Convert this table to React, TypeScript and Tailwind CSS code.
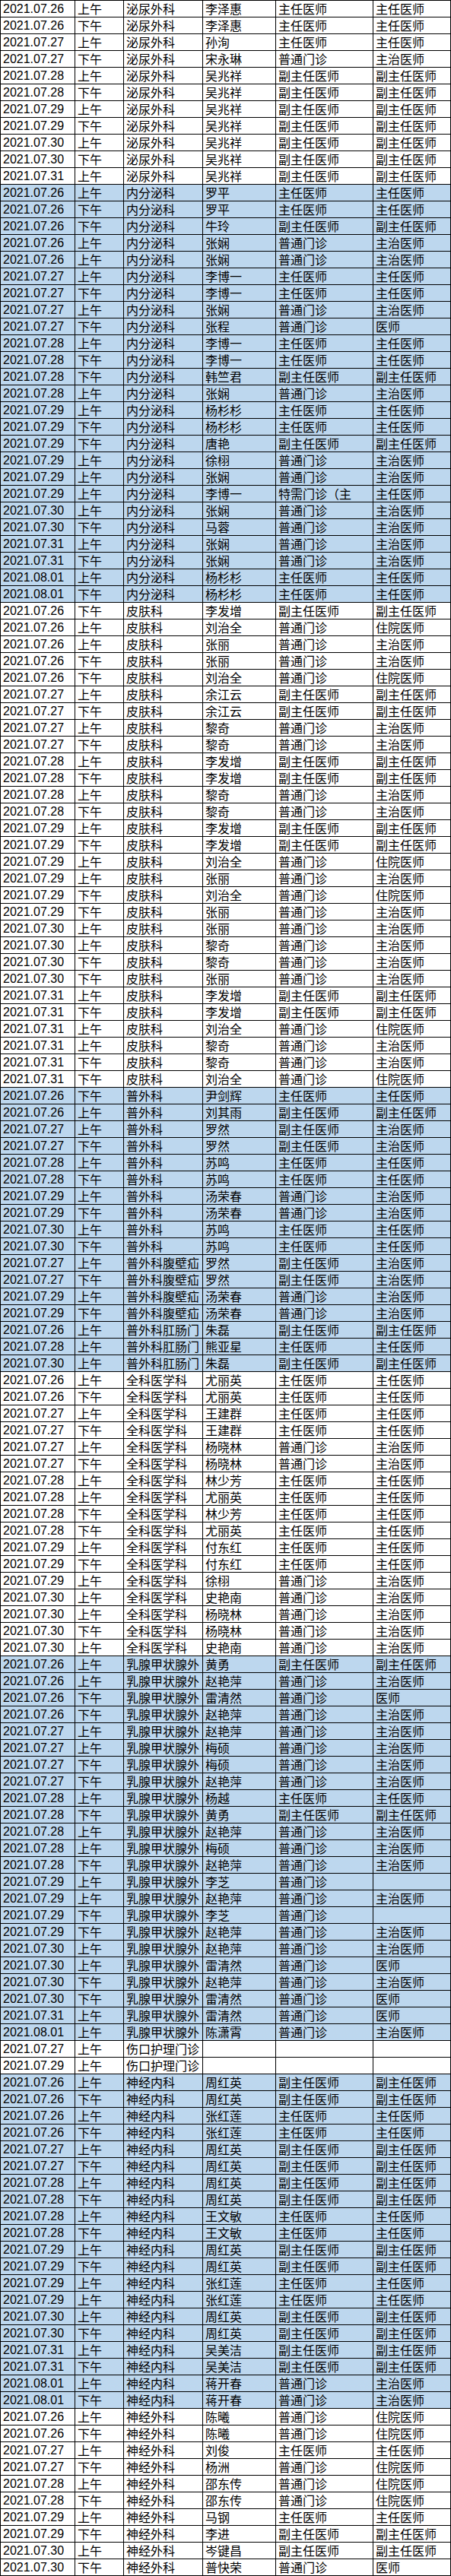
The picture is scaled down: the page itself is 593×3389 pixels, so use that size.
const Z = "主任医师";
const F = "副主任医师";
const P = "普通门诊";
const ZZ = "主治医师";
const ZY = "住院医师";
const Y = "医师";

type Row = [string, string, string, string, string];
type Section = { dept: string; blue: boolean; rows: Row[]; subs?: { dept: string; rows: Row[] }[] };

const sections: Section[] = [
  {
    dept: "泌尿外科",
    blue: false,
    rows: [
      ["07.26", "上午", "李泽惠", Z, Z],
      ["07.26", "下午", "李泽惠", Z, Z],
      ["07.27", "上午", "孙洵", Z, Z],
      ["07.27", "下午", "宋永琳", P, ZZ],
      ["07.28", "上午", "吴兆祥", F, F],
      ["07.28", "下午", "吴兆祥", F, F],
      ["07.29", "上午", "吴兆祥", F, F],
      ["07.29", "下午", "吴兆祥", F, F],
      ["07.30", "上午", "吴兆祥", F, F],
      ["07.30", "下午", "吴兆祥", F, F],
      ["07.31", "上午", "吴兆祥", F, F],
    ],
  },
  {
    dept: "内分泌科",
    blue: true,
    rows: [
      ["07.26", "上午", "罗平", Z, Z],
      ["07.26", "下午", "罗平", Z, Z],
      ["07.26", "下午", "牛玲", F, F],
      ["07.26", "上午", "张娴", P, ZZ],
      ["07.26", "上午", "张娴", P, ZZ],
      ["07.27", "上午", "李博一", Z, Z],
      ["07.27", "下午", "李博一", Z, Z],
      ["07.27", "上午", "张娴", P, ZZ],
      ["07.27", "下午", "张程", P, Y],
      ["07.28", "上午", "李博一", Z, Z],
      ["07.28", "下午", "李博一", Z, Z],
      ["07.28", "下午", "韩竺君", F, F],
      ["07.28", "上午", "张娴", P, ZZ],
      ["07.29", "上午", "杨杉杉", Z, Z],
      ["07.29", "下午", "杨杉杉", Z, Z],
      ["07.29", "下午", "唐艳", F, F],
      ["07.29", "上午", "徐栩", P, ZZ],
      ["07.29", "上午", "张娴", P, ZZ],
      ["07.29", "上午", "李博一", "特需门诊（主", Z],
      ["07.30", "上午", "张娴", P, ZZ],
      ["07.30", "下午", "马蓉", P, ZZ],
      ["07.31", "上午", "张娴", P, ZZ],
      ["07.31", "下午", "张娴", P, ZZ],
      ["08.01", "上午", "杨杉杉", Z, Z],
      ["08.01", "下午", "杨杉杉", Z, Z],
    ],
  },
  {
    dept: "皮肤科",
    blue: false,
    rows: [
      ["07.26", "下午", "李发增", F, F],
      ["07.26", "上午", "刘治全", P, ZY],
      ["07.26", "上午", "张丽", P, ZZ],
      ["07.26", "下午", "张丽", P, ZZ],
      ["07.26", "下午", "刘治全", P, ZY],
      ["07.27", "上午", "余江云", F, F],
      ["07.27", "下午", "余江云", F, F],
      ["07.27", "上午", "黎奇", P, ZZ],
      ["07.27", "下午", "黎奇", P, ZZ],
      ["07.28", "上午", "李发增", F, F],
      ["07.28", "下午", "李发增", F, F],
      ["07.28", "上午", "黎奇", P, ZZ],
      ["07.28", "下午", "黎奇", P, ZZ],
      ["07.29", "上午", "李发增", F, F],
      ["07.29", "下午", "李发增", F, F],
      ["07.29", "上午", "刘治全", P, ZY],
      ["07.29", "上午", "张丽", P, ZZ],
      ["07.29", "下午", "刘治全", P, ZY],
      ["07.29", "下午", "张丽", P, ZZ],
      ["07.30", "上午", "张丽", P, ZZ],
      ["07.30", "上午", "黎奇", P, ZZ],
      ["07.30", "下午", "黎奇", P, ZZ],
      ["07.30", "下午", "张丽", P, ZZ],
      ["07.31", "上午", "李发增", F, F],
      ["07.31", "下午", "李发增", F, F],
      ["07.31", "上午", "刘治全", P, ZY],
      ["07.31", "上午", "黎奇", P, ZZ],
      ["07.31", "下午", "黎奇", P, ZZ],
      ["07.31", "下午", "刘治全", P, ZY],
    ],
  },
  {
    dept: "普外科",
    blue: true,
    rows: [
      ["07.26", "下午", "尹剑辉", Z, Z],
      ["07.26", "上午", "刘其雨", F, F],
      ["07.27", "上午", "罗然", F, ZZ],
      ["07.27", "下午", "罗然", F, ZZ],
      ["07.28", "上午", "苏鸣", Z, Z],
      ["07.28", "下午", "苏鸣", Z, Z],
      ["07.29", "上午", "汤荣春", P, ZZ],
      ["07.29", "下午", "汤荣春", P, ZZ],
      ["07.30", "上午", "苏鸣", Z, Z],
      ["07.30", "下午", "苏鸣", Z, Z],
    ],
    subs: [
      {
        dept: "普外科腹壁疝",
        rows: [
          ["07.27", "上午", "罗然", F, ZZ],
          ["07.27", "下午", "罗然", F, ZZ],
          ["07.29", "上午", "汤荣春", P, ZZ],
          ["07.29", "下午", "汤荣春", P, ZZ],
        ],
      },
      {
        dept: "普外科肛肠门",
        rows: [
          ["07.26", "上午", "朱磊", F, F],
          ["07.28", "上午", "熊亚星", Z, Z],
          ["07.30", "上午", "朱磊", F, F],
        ],
      },
    ],
  },
  {
    dept: "全科医学科",
    blue: false,
    rows: [
      ["07.26", "上午", "尤丽英", Z, Z],
      ["07.26", "下午", "尤丽英", Z, Z],
      ["07.27", "上午", "王建群", Z, Z],
      ["07.27", "下午", "王建群", Z, Z],
      ["07.27", "上午", "杨晓林", P, ZZ],
      ["07.27", "下午", "杨晓林", P, ZZ],
      ["07.28", "上午", "林少芳", Z, Z],
      ["07.28", "上午", "尤丽英", Z, Z],
      ["07.28", "下午", "林少芳", Z, Z],
      ["07.28", "下午", "尤丽英", Z, Z],
      ["07.29", "上午", "付东红", Z, Z],
      ["07.29", "下午", "付东红", Z, Z],
      ["07.29", "上午", "徐栩", P, ZZ],
      ["07.30", "上午", "史艳南", P, ZZ],
      ["07.30", "上午", "杨晓林", P, ZZ],
      ["07.30", "下午", "杨晓林", P, ZZ],
      ["07.30", "上午", "史艳南", P, ZZ],
    ],
  },
  {
    dept: "乳腺甲状腺外",
    blue: true,
    rows: [
      ["07.26", "上午", "黄勇", F, F],
      ["07.26", "上午", "赵艳萍", P, ZZ],
      ["07.26", "下午", "雷清然", P, Y],
      ["07.26", "下午", "赵艳萍", P, ZZ],
      ["07.27", "上午", "赵艳萍", P, ZZ],
      ["07.27", "上午", "梅硕", P, ZZ],
      ["07.27", "下午", "梅硕", P, ZZ],
      ["07.27", "下午", "赵艳萍", P, ZZ],
      ["07.28", "上午", "杨越", Z, Z],
      ["07.28", "下午", "黄勇", F, F],
      ["07.28", "上午", "赵艳萍", P, ZZ],
      ["07.28", "上午", "梅硕", P, ZZ],
      ["07.28", "下午", "赵艳萍", P, ZZ],
      ["07.29", "上午", "李芝", P, ""],
      ["07.29", "上午", "赵艳萍", P, ZZ],
      ["07.29", "下午", "李芝", P, ""],
      ["07.29", "下午", "赵艳萍", P, ZZ],
      ["07.30", "上午", "赵艳萍", P, ZZ],
      ["07.30", "上午", "雷清然", P, Y],
      ["07.30", "下午", "赵艳萍", P, ZZ],
      ["07.30", "下午", "雷清然", P, Y],
      ["07.31", "上午", "雷清然", P, Y],
      ["08.01", "上午", "陈潇霄", P, ZZ],
    ],
  },
  {
    dept: "伤口护理门诊",
    blue: false,
    rows: [
      ["07.27", "上午", "", "", ""],
      ["07.29", "上午", "", "", ""],
    ],
  },
  {
    dept: "神经内科",
    blue: true,
    rows: [
      ["07.26", "上午", "周红英", F, F],
      ["07.26", "下午", "周红英", F, F],
      ["07.26", "上午", "张红莲", Z, Z],
      ["07.26", "下午", "张红莲", Z, Z],
      ["07.27", "上午", "周红英", F, F],
      ["07.27", "下午", "周红英", F, F],
      ["07.28", "上午", "周红英", F, F],
      ["07.28", "下午", "周红英", F, F],
      ["07.28", "上午", "王文敏", Z, Z],
      ["07.28", "下午", "王文敏", Z, Z],
      ["07.29", "上午", "周红英", F, F],
      ["07.29", "下午", "周红英", F, F],
      ["07.29", "上午", "张红莲", Z, Z],
      ["07.29", "上午", "张红莲", Z, Z],
      ["07.30", "上午", "周红英", F, F],
      ["07.30", "下午", "周红英", F, F],
      ["07.31", "上午", "吴美洁", F, F],
      ["07.31", "下午", "吴美洁", F, F],
      ["08.01", "上午", "蒋开春", P, ZZ],
      ["08.01", "下午", "蒋开春", P, ZZ],
    ],
  },
  {
    dept: "神经外科",
    blue: false,
    rows: [
      ["07.26", "上午", "陈曦", P, ZY],
      ["07.26", "下午", "陈曦", P, ZY],
      ["07.27", "上午", "刘俊", Z, Z],
      ["07.27", "下午", "杨洲", P, ZY],
      ["07.28", "上午", "邵东传", P, ZY],
      ["07.28", "下午", "邵东传", P, ZY],
      ["07.29", "上午", "马钢", Z, Z],
      ["07.29", "下午", "李进", F, F],
      ["07.30", "上午", "岑键昌", F, F],
      ["07.30", "下午", "普快荣", P, Y],
    ],
  },
];

const cjk = "font-['Noto_Sans_CJK_SC',sans-serif]";
const cell = "h-full whitespace-nowrap border-r border-black pl-[3px] text-[16px] leading-[21px]";

function ScheduleRow({ dept, blue, row }: { dept: string; blue: boolean; row: Row }) {
  const [date, half, name, kind, title] = row;
  return (
    <div className={`flex h-[22px] border-b border-black text-black ${blue ? "bg-[#bdd7ee]" : "bg-white"}`}>
      <div className={`${cell} w-[98px] font-['Liberation_Sans',Arial,sans-serif]`}>2021.{date}</div>
      <div className={`${cell} ${cjk} w-[64px]`}>{half}</div>
      <div className={`${cell} ${cjk} w-[104px]`}>{dept}</div>
      <div className={`${cell} ${cjk} w-[96px]`}>{name}</div>
      <div className={`${cell} ${cjk} w-[128px]`}>{kind}</div>
      <div className={`${cell} ${cjk} w-[102px]`}>{title}</div>
    </div>
  );
}

export default function App() {
  return (
    <div className="min-h-screen bg-white">
      <div className="w-[593px] border-l border-t border-black">
        {sections.map((s) => (
          <div key={s.dept}>
            {s.rows.map((r, i) => (
              <ScheduleRow key={i} dept={s.dept} blue={s.blue} row={r} />
            ))}
            {s.subs?.map((sub) =>
              sub.rows.map((r, i) => <ScheduleRow key={sub.dept + i} dept={sub.dept} blue={s.blue} row={r} />)
            )}
          </div>
        ))}
      </div>
    </div>
  );
}
